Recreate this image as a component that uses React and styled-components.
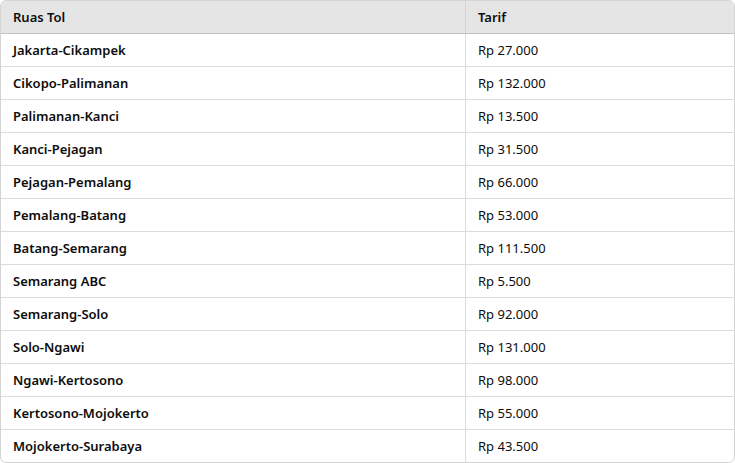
import React from "react";
import styled, { createGlobalStyle } from "styled-components";

const rows = [
    ["Jakarta-Cikampek", "Rp 27.000"],
    ["Cikopo-Palimanan", "Rp 132.000"],
    ["Palimanan-Kanci", "Rp 13.500"],
    ["Kanci-Pejagan", "Rp 31.500"],
    ["Pejagan-Pemalang", "Rp 66.000"],
    ["Pemalang-Batang", "Rp 53.000"],
    ["Batang-Semarang", "Rp 111.500"],
    ["Semarang ABC", "Rp 5.500"],
    ["Semarang-Solo", "Rp 92.000"],
    ["Solo-Ngawi", "Rp 131.000"],
    ["Ngawi-Kertosono", "Rp 98.000"],
    ["Kertosono-Mojokerto", "Rp 55.000"],
    ["Mojokerto-Surabaya", "Rp 43.500"],
];

const App = () => {
    return (
        <>
            <GlobalStyle />
            <S.Table>
                <S.Head>
                    <S.HeadCell>Ruas Tol</S.HeadCell>
                    <S.HeadCell $last>Tarif</S.HeadCell>
                </S.Head>
                {rows.map(([ruas, tarif], i) => (
                    <S.Row key={ruas} $last={i === rows.length - 1}>
                        <S.Cell $bold>{ruas}</S.Cell>
                        <S.Cell $last>{tarif}</S.Cell>
                    </S.Row>
                ))}
            </S.Table>
        </>
    );
};

export default App;

const GlobalStyle = createGlobalStyle`
    body {
        margin: 0;
        background: #ffffff;
        font-family: "Noto Sans", "Open Sans", sans-serif;
    }
`;

const S = {
    Table: styled.div`
        width: 735px;
        box-sizing: border-box;
        border: 1px solid #d4d4d4;
        border-radius: 6px;
        overflow: hidden;
        font-size: 13px;
        color: #0d0d0d;
    `,
    Head: styled.div`
        display: grid;
        grid-template-columns: 465px 1fr;
        height: 32px;
        background: #e5e5e5;
        border-bottom: 1px solid #c2c2c2;
    `,
    HeadCell: styled.div`
        display: flex;
        align-items: center;
        padding-left: 12px;
        font-weight: 600;
        border-right: ${(p) => (p.$last ? "none" : "1px solid #d4d4d4")};
    `,
    Row: styled.div`
        display: grid;
        grid-template-columns: 465px 1fr;
        height: ${(p) => (p.$last ? "32px" : "32px")};
        border-bottom: ${(p) => (p.$last ? "none" : "1px solid #dcdcdc")};
    `,
    Cell: styled.div`
        display: flex;
        align-items: center;
        padding-left: 12px;
        font-weight: ${(p) => (p.$bold ? 600 : 400)};
        border-right: ${(p) => (p.$last ? "none" : "1px solid #dcdcdc")};
    `,
};
